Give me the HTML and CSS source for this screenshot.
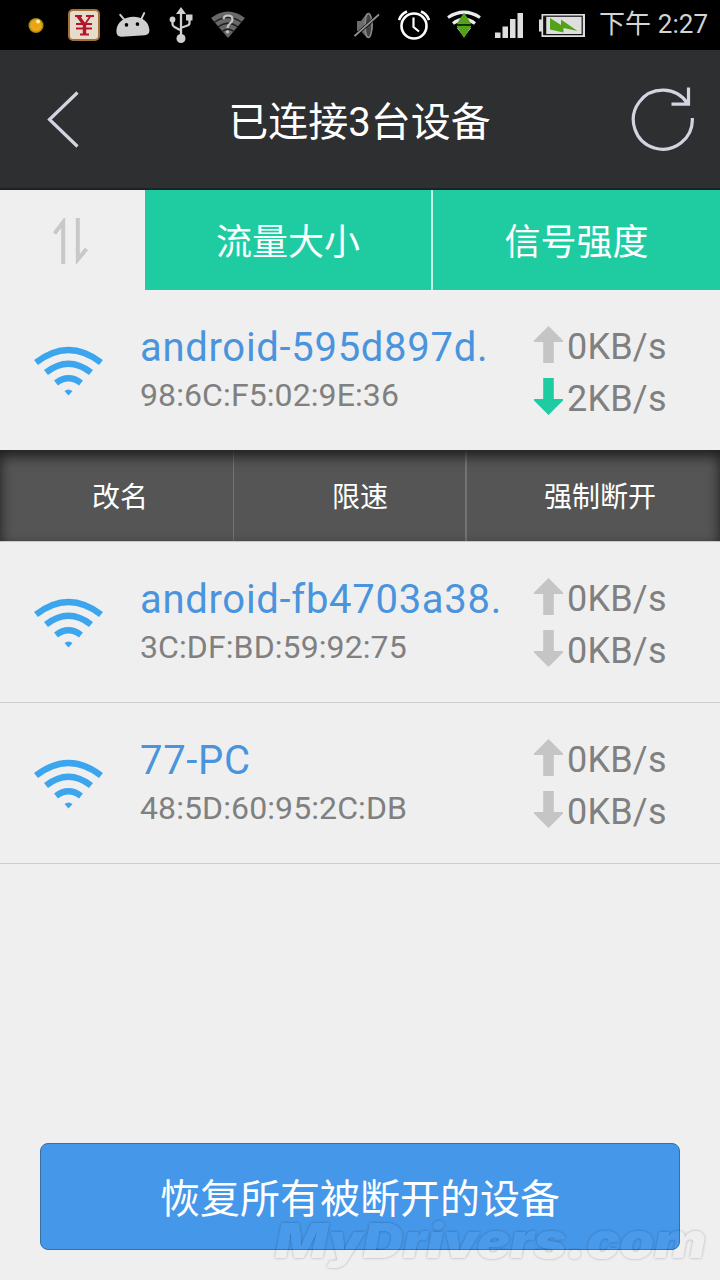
FILE: index.html
```html
<!DOCTYPE html>
<html lang="zh-CN">
<head>
    <meta charset="UTF-8">
    <meta name="viewport" content="width=device-width, initial-scale=1.0">
    <title>已连接3台设备</title>
    <link rel="stylesheet" href="styles.css">
</head>
<body>
    <svg class="symbols" width="0" height="0">
        <symbol id="wifi" viewBox="0 0 70 50">
            <g fill="none" stroke="#3ba6ee" stroke-width="6.4">
                <path d="M2 16.5Q34.500 -8.500 67 16.5"/>
                <path d="M12 26.5Q34.500 9 57 26.5"/>
                <path d="M22 37Q34.500 27.500 47 37"/>
            </g>
            <path d="M30.500 45Q34.500 42 38.500 45L34.500 49.500Z" fill="#3ba6ee"/>
        </symbol>
        <symbol id="up" viewBox="0 0 29 37">
            <path d="M14.500 0L29 14.500V16H19.800V37H9.200V16H0V14.500Z" fill="currentColor"/>
        </symbol>
        <symbol id="down" viewBox="0 0 29 37">
            <path d="M14.500 37L29 22.500V21H19.800V0H9.200V21H0V22.500Z" fill="currentColor"/>
        </symbol>
    </svg>

    <div class="status-bar">
        <div class="status-left">
            <svg width="16" height="50" viewBox="28 0 16 50">
                <defs>
                    <radialGradient id="dot"><stop offset="0" stop-color="#f09a10"/><stop offset=".65" stop-color="#ecaa18"/><stop offset="1" stop-color="#8c7a10"/></radialGradient>
                </defs>
                <circle cx="36" cy="25.500" r="7.600" fill="url(#dot)"/>
                <circle cx="38" cy="21.500" r="2" fill="#fff0a0"/>
            </svg>
            <svg width="32" height="50" viewBox="68 0 32 50">
                <rect x="69" y="10" width="30" height="30" rx="4" fill="#e6dccb" stroke="#a5713a" stroke-width="2"/>
                <path d="M75 16H82M86 16H94M78.500 16L84.500 25L90.500 16M76 24H92M76 28.500H92M80 34.500H89" fill="none" stroke="#b5142b" stroke-width="1.800"/>
                <path d="M78 16L84.500 25V34" fill="none" stroke="#b5142b" stroke-width="3.400"/>
            </svg>
            <svg width="34" height="50" viewBox="116 0 34 50">
                <g transform="rotate(-4 132 25)">
                    <path d="M116 31C116 12 149 12 149 31Q149 36 144 36H121Q116 36 116 31Z" fill="#cfcfcf"/>
                    <path d="M121 14L126 21M145 14L141 21" stroke="#cfcfcf" stroke-width="2" stroke-linecap="round"/>
                    <circle cx="126.500" cy="24.500" r="1.800"/>
                    <circle cx="137.500" cy="24.500" r="1.800"/>
                </g>
            </svg>
            <svg width="24" height="50" viewBox="169 0 24 50">
                <g fill="none" stroke="#cfcfcf" stroke-width="2.300">
                    <path d="M181 12V38M172.500 20V24Q172.500 26 174.500 27L180 30M189.500 18V23Q189.500 25 187.500 25.500L182 27.500"/>
                </g>
                <path d="M181 7L186 14H176ZM186 14.500H192.500V20.500H186Z" fill="#cfcfcf"/>
                <circle cx="172.500" cy="19.500" r="2.900" fill="#cfcfcf"/>
                <circle cx="181" cy="38.500" r="4.500" fill="#cfcfcf"/>
            </svg>
            <svg width="34" height="50" viewBox="211 0 34 50">
                <path d="M211 18Q228 5 245 18L228 38Z" fill="#686868"/>
                <path d="M214 22.500Q228 12.500 242 22.500M218 27Q228 19.500 238 27M222 31.500Q228 27 234 31.500" fill="none" stroke="#202020" stroke-width="1.500"/>
                <path d="M223.500 19Q224 15.500 228 15.500Q232.500 15.500 232.500 19.500Q232.500 21.500 230 23.500Q227.500 25.500 227.500 28" fill="none" stroke="#c4c4c4" stroke-width="2.200"/>
                <circle cx="227.500" cy="31.800" r="1.600" fill="#c4c4c4"/>
            </svg>
        </div>
        <div class="status-right">
            <svg width="26" height="50" viewBox="354 0 26 50">
                <path d="M357 21H361L367 13Q373 18 373 25Q373 33 367 38L361 31H357Z" fill="#6c6c6c"/>
                <ellipse cx="368.500" cy="25.500" rx="3.500" ry="12" fill="#424242" stroke="#8a8a8a" stroke-width="1.500"/>
                <path d="M353.500 37L378 15.500" stroke="#000" stroke-width="3"/>
                <path d="M354.500 36L379 14.500" stroke="#939393" stroke-width="1.700"/>
            </svg>
            <svg width="32" height="50" viewBox="398 0 32 50">
                <g fill="none" stroke="#fff" stroke-width="2.600">
                    <circle cx="414" cy="26" r="12.500"/>
                    <path d="M413.500 17.500V27L419 31.500" stroke-width="2.200"/>
                    <path d="M399 20Q401 14 407 11.500M421 11.500Q427 14 429 20"/>
                </g>
            </svg>
            <svg width="34" height="50" viewBox="447 0 34 50">
                <path d="M448 17.500Q464 7 480 17.500M453 23.500Q464 15 475 23.500" fill="none" stroke="#ececec" stroke-width="3.200"/>
                <path d="M457 28Q464 23 471 28L464 37Z" fill="#ddd"/>
                <path d="M464 12.500L471 23.500V24.500H457V23.500Z" fill="#52a317"/>
                <path d="M464 38L471 26.500V25.500H457V26.500Z" fill="#52a317"/>
                <path d="M457 25H471" stroke="#000" stroke-width="1"/>
            </svg>
            <svg width="28" height="50" viewBox="495 0 28 50">
                <path d="M495 32.500H500.500V38H495ZM502.500 26.500H508V38H502.500ZM510 19H515.500V38H510ZM517.500 13H523V38H517.500Z" fill="#dedede"/>
            </svg>
            <svg width="46" height="50" viewBox="539 0 46 50">
                <path d="M539 19.500H541.500V14H585V37H541.500V31.500H539Z" fill="#dedede"/>
                <rect x="543.800" y="16.200" width="38.400" height="18.400" fill="none" stroke="#111" stroke-width="1.200"/>
                <path d="M545 16.500V34.500" stroke="#111" stroke-width="2.500"/>
                <path d="M550 18L561 25V19.500L577.500 31L563.500 28V32.500L550 29.500Z" fill="#52a317"/>
            </svg>
            <span class="clock">下午 2:27</span>
        </div>
    </div>

    <div class="header">
        <svg width="34" height="60" viewBox="46 90 34 60">
            <path d="M77.500 92.500L49.500 119.500L77.500 146.500" fill="none" stroke="#d4d4e0" stroke-width="3.200"/>
        </svg>
        <h1>已连接3台设备</h1>
        <svg width="64" height="68" viewBox="631 86 64 68">
            <path d="M692.300 118A29.500 29.500 0 1 1 687.500 103.500M671.500 104.200H688.500V87.500" fill="none" stroke="#d4d4e0" stroke-width="3.200"/>
        </svg>
    </div>

    <div class="tabs">
        <div class="sort">
            <svg width="36" height="46" viewBox="0 0 36 46">
                <path d="M1.500 15.500L10.200 4V46M24.800 0V41.500L33.500 31" fill="none" stroke="#c8c8c8" stroke-width="4"/>
            </svg>
        </div>
        <div class="tab first">流量大小</div>
        <div class="tab">信号强度</div>
    </div>

    <div class="device">
        <svg class="wifi"><use href="#wifi"/></svg>
        <div class="info">
            <div class="name">android-595d897d.</div>
            <div class="mac">98:6C:F5:02:9E:36</div>
        </div>
        <div class="speeds">
            <div class="speed"><svg class="arrow"><use href="#up"/></svg>0KB/s</div>
            <div class="speed"><svg class="arrow active"><use href="#down"/></svg>2KB/s</div>
        </div>
    </div>

    <div class="actions">
        <div class="action">改名</div>
        <div class="action">限速</div>
        <div class="action">强制断开</div>
    </div>

    <div class="device line">
        <svg class="wifi"><use href="#wifi"/></svg>
        <div class="info">
            <div class="name">android-fb4703a38.</div>
            <div class="mac">3C:DF:BD:59:92:75</div>
        </div>
        <div class="speeds">
            <div class="speed"><svg class="arrow"><use href="#up"/></svg>0KB/s</div>
            <div class="speed"><svg class="arrow"><use href="#down"/></svg>0KB/s</div>
        </div>
    </div>

    <div class="device line">
        <svg class="wifi"><use href="#wifi"/></svg>
        <div class="info">
            <div class="name">77-PC</div>
            <div class="mac">48:5D:60:95:2C:DB</div>
        </div>
        <div class="speeds">
            <div class="speed"><svg class="arrow"><use href="#up"/></svg>0KB/s</div>
            <div class="speed"><svg class="arrow"><use href="#down"/></svg>0KB/s</div>
        </div>
    </div>

    <div class="footer">
        <button class="restore">恢复所有被断开的设备</button>
    </div>

    <svg class="watermark" width="450" height="70" viewBox="0 0 450 70">
        <filter id="edge" x="-5%" y="-20%" width="110%" height="140%">
            <feGaussianBlur in="SourceAlpha" stdDeviation="1.8" result="blur"/>
            <feComposite in="blur" in2="SourceAlpha" operator="out" result="ring"/>
            <feComponentTransfer in="ring" result="shadow"><feFuncA type="linear" slope=".3"/></feComponentTransfer>
            <feComponentTransfer in="SourceGraphic" result="fill"><feFuncA type="linear" slope=".03"/></feComponentTransfer>
            <feMerge><feMergeNode in="shadow"/><feMergeNode in="fill"/></feMerge>
        </filter>
        <text x="13" y="48" textLength="431" lengthAdjust="spacingAndGlyphs" filter="url(#edge)">MyDrivers.com</text>
    </svg>
</body>
</html>
```
FILE: styles.css
```css
* {
    box-sizing: border-box;
}
body {
    margin: 0;
    position: relative;
    display: flex;
    flex-direction: column;
    height: 1280px;
    background-color: #efefef;
    font-family: Roboto, "Noto Sans CJK SC", sans-serif;
    overflow: hidden;
}
svg {
    display: block;
    flex-shrink: 0;
}
.symbols {
    position: absolute;
}
.status-bar {
    display: flex;
    justify-content: space-between;
    height: 50px;
    padding: 0 11px 0 28px;
    background-color: #000;
}
.status-left {
    display: flex;
    gap: 18px;
}
.status-left svg:first-child {
    margin-right: 6px;
}
.status-left svg:nth-child(2) {
    margin-right: -2px;
}
.status-left svg:nth-child(3) {
    margin-right: 1px;
}
.status-right {
    display: flex;
    gap: 16px;
}
.status-right svg:first-child {
    margin-right: 2px;
}
.status-right svg:nth-child(2) {
    margin-right: 1px;
}
.status-right svg:nth-child(3) {
    margin-right: -2px;
}
.clock {
    width: 110px;
    margin-left: -2px;
    font-size: 26px;
    line-height: 49px;
    letter-spacing: 0.1px;
    white-space: nowrap;
    color: #d4d4d4;
}
.header {
    display: flex;
    justify-content: space-between;
    align-items: center;
    height: 140px;
    padding: 2px 25px 0 46px;
    background-color: #2e2f31;
    border-bottom: 2px solid #1c2224;
}
.header h1 {
    margin: 6px 0 0 8px;
    font-size: 40px;
    font-weight: 400;
    line-height: 60px;
    color: #fff;
}
.tabs {
    display: flex;
    height: 100px;
}
.sort {
    width: 145px;
    padding: 28px 0 0 53px;
}
.tab {
    width: 287px;
    font-size: 36px;
    line-height: 106px;
    text-align: center;
    color: #fff;
    background-color: #1fcca2;
}
.tab.first {
    width: 288px;
    border-right: 2px solid #c5f2e6;
}
.device {
    display: flex;
    height: 160px;
    padding-left: 34px;
}
.device.line {
    height: 161px;
    border-bottom: 1px solid #cecece;
}
.wifi {
    width: 70px;
    height: 50px;
    margin-top: 56px;
}
.info {
    width: 393px;
    padding: 34px 0 0 36px;
}
.name {
    font-size: 40px;
    line-height: 48px;
    letter-spacing: 0.7px;
    white-space: nowrap;
    color: #4a94de;
}
.mac {
    margin-top: 3px;
    font-size: 32px;
    line-height: 40px;
    letter-spacing: 0.1px;
    white-space: nowrap;
    color: #808080;
}
.speeds {
    padding: 31px 0 0 37px;
}
.speed {
    display: flex;
    align-items: center;
    font-size: 36px;
    line-height: 52px;
    letter-spacing: 0.2px;
    color: #808080;
}
.arrow {
    width: 29px;
    height: 37px;
    margin: 0 4px 5px 0;
    color: #c5c5c5;
}
.arrow.active {
    color: #1fcca2;
}
.actions {
    display: flex;
    height: 92px;
    border-bottom: 1px solid #c8c8c8;
    background:
        linear-gradient(#747474, #747474) 233px 0 / 1px 100% no-repeat,
        linear-gradient(#747474, #747474) 465px 0 / 2px 100% no-repeat,
        #555;
    box-shadow: inset 0 6px 13px #1c1c1c;
}
.action {
    flex: 1;
    font-size: 28px;
    line-height: 96px;
    text-align: center;
    color: #fff;
}
.footer {
    margin-top: auto;
    padding: 0 40px 30px;
}
.restore {
    display: block;
    width: 640px;
    height: 107px;
    padding: 0 0 2px;
    font-family: inherit;
    font-size: 40px;
    color: #fff;
    background-color: #4597ea;
    border: 1px solid #37709f;
    border-radius: 8px;
}
.watermark {
    position: absolute;
    left: 262px;
    top: 1210px;
}
.watermark text {
    font-family: Inter, "Liberation Sans", sans-serif;
    font-size: 48px;
    font-weight: 900;
    font-style: italic;
    fill: #fff;
}
```
